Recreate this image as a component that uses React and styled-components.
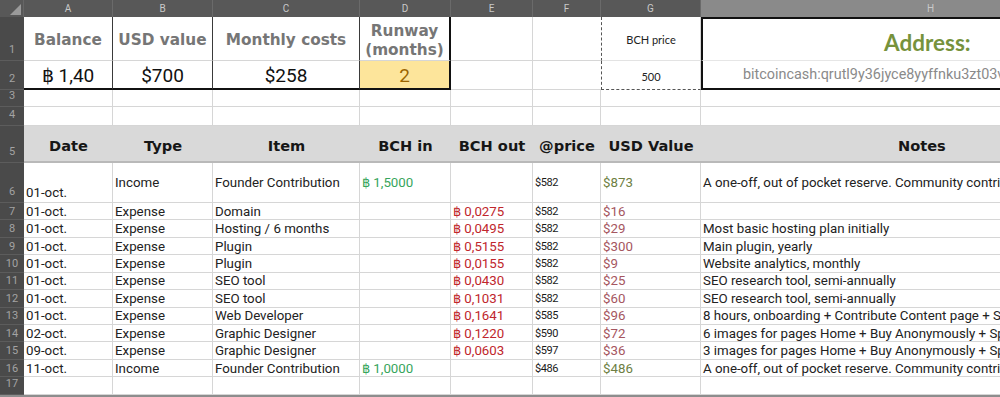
import React from "react";
import styled, { createGlobalStyle, css } from "styled-components";

const Global = createGlobalStyle`
  html, body { margin: 0; padding: 0; background: #fff; overflow: hidden; }
  * { box-sizing: border-box; }
`;

const COLS = ["A", "B", "C", "D", "E", "F", "G", "H"];
const ROW_H = "17px 44px 29px 17px 19px 37px 40px repeat(11, 17.43px) 4px";

const Frame = styled.div`
  width: 1000px;
  height: 397px;
  overflow: hidden;
  background: #8d8d8d;
`;

const Sheet = styled.div`
  display: grid;
  grid-template-columns: 24px 89px 100px 147px 91px 82px 68px 100px 460px;
  grid-template-rows: ${ROW_H};
  width: 1161px;
  font-family: Roboto, "Liberation Sans", sans-serif;
  color: #1e1e1e;
`;

const Corner = styled.div`
  background: #585858;
  border-right: 1px solid #666;
  position: relative;
  &::after {
    content: "";
    position: absolute;
    right: 2px;
    bottom: 2px;
    width: 0;
    height: 0;
    border-left: 11px solid transparent;
    border-bottom: 11px solid #9a9a9a;
  }
`;

const ColHead = styled.div`
  background: ${(p) => (p.$active ? "#8a8a8a" : "#585858")};
  color: #c9c9c9;
  font-size: 10px;
  display: flex;
  align-items: center;
  justify-content: center;
  border-right: 1px solid #6a6a6a;
`;

const RowHead = styled.div`
  background: #4a4a4a;
  color: #a3a3a3;
  font-size: 11px;
  display: flex;
  align-items: ${(p) => (p.$bottom ? "flex-end" : "center")};
  justify-content: center;
  padding-bottom: ${(p) => (p.$bottom ? "4px" : "0")};
  border-bottom: 1px solid #5c5c5c;
`;

const Cell = styled.div`
  background: #fff;
  display: flex;
  align-items: ${(p) => p.$v || "center"};
  justify-content: ${(p) => p.$h || "flex-start"};
  padding: 0 2px;
  white-space: nowrap;
  overflow: hidden;
  font-size: 13.3px;
  border-right: ${(p) => p.$r || "1px solid #d6d6d6"};
  border-bottom: ${(p) => p.$b || "1px solid #d6d6d6"};
  border-left: ${(p) => p.$l || "none"};
  border-top: ${(p) => p.$t || "none"};
`;

const Label = styled(Cell)`
  font-family: "DejaVu Sans", sans-serif;
  font-weight: 700;
  font-size: 15.3px;
  color: #767676;
  text-align: center;
  line-height: 19px;
  white-space: normal;
  padding-top: 4px;
`;

const BigValue = styled(Cell)`
  font-size: 19px;
  color: #111;
  padding-top: 2px;
  ${(p) =>
    p.$neutral &&
    css`
      background: #fde59b;
      color: #9c6500;
    `}
`;

const SmallCalc = styled(Cell)`
  font-family: Lato, "Open Sans", sans-serif;
  font-size: 11px;
  color: #222;
  padding-top: 2px;
`;

const AddressTitle = styled(Cell)`
  font-family: Lato, "Open Sans", sans-serif;
  font-weight: 700;
  font-size: 22.5px;
  color: #76923c;
  padding-left: 181px;
  padding-top: 5px;
`;

const AddressValue = styled(Cell)`
  font-size: 14.4px;
  color: #8a8a8a;
  padding-left: 40px;
`;

const Band = styled(Cell)`
  background: #d9d9d9;
  font-family: "DejaVu Sans", sans-serif;
  font-weight: 700;
  font-size: 14.6px;
  color: #161616;
  border-right: none;
  border-bottom: 2px solid #b9b9b9;
  padding: 3px 0 0 0;
`;

const Data = styled(Cell)`
  color: ${(p) => p.$tone || "#222"};
`;

const Price = styled(Cell)`
  font-size: 11px;
  letter-spacing: -0.4px;
  color: #1a1a1a;
`;

const TONE = {
  in: "#37a55c",
  out: "#c0262c",
  usdIn: "#6e7f43",
  usdOut: "#a55660",
};

const rows = [
  ["01-oct.", "Income", "Founder Contribution", "฿ 1,5000", "", "$582", "$873", "A one-off, out of pocket reserve. Community contributions welcome."],
  ["01-oct.", "Expense", "Domain", "", "฿ 0,0275", "$582", "$16", ""],
  ["01-oct.", "Expense", "Hosting / 6 months", "", "฿ 0,0495", "$582", "$29", "Most basic hosting plan initially"],
  ["01-oct.", "Expense", "Plugin", "", "฿ 0,5155", "$582", "$300", "Main plugin, yearly"],
  ["01-oct.", "Expense", "Plugin", "", "฿ 0,0155", "$582", "$9", "Website analytics, monthly"],
  ["01-oct.", "Expense", "SEO tool", "", "฿ 0,0430", "$582", "$25", "SEO research tool, semi-annually"],
  ["01-oct.", "Expense", "SEO tool", "", "฿ 0,1031", "$582", "$60", "SEO research tool, semi-annually"],
  ["01-oct.", "Expense", "Web Developer", "", "฿ 0,1641", "$585", "$96", "8 hours, onboarding + Contribute Content page + Site setup"],
  ["02-oct.", "Expense", "Graphic Designer", "", "฿ 0,1220", "$590", "$72", "6 images for pages Home + Buy Anonymously + Spend"],
  ["09-oct.", "Expense", "Graphic Designer", "", "฿ 0,0603", "$597", "$36", "3 images for pages Home + Buy Anonymously + Spend"],
  ["11-oct.", "Income", "Founder Contribution", "฿ 1,0000", "", "$486", "$486", "A one-off, out of pocket reserve. Community contributions welcome."],
  ["", "", "", "", "", "", "", ""],
];

const DARK = "1px solid #3a3a3a";
const THICK = "2px solid #111";
const DASH = "1px dashed #555";

function EmptyRow({ n }) {
  return (
    <>
      <RowHead $bottom>{n}</RowHead>
      {COLS.map((c) => (
        <Cell key={c} />
      ))}
    </>
  );
}

function DataRow({ n, r }) {
  const income = r[1] === "Income";
  const tall = n === 6;
  return (
    <>
      <RowHead $bottom={tall}>{n}</RowHead>
      <Data $v={tall ? "flex-end" : "center"} style={tall ? { paddingBottom: 2 } : undefined}>
        {r[0]}
      </Data>
      <Data>{r[1]}</Data>
      <Data>{r[2]}</Data>
      <Data $tone={TONE.in}>{r[3]}</Data>
      <Data $tone={TONE.out}>{r[4]}</Data>
      <Price>{r[5]}</Price>
      <Data $tone={income ? TONE.usdIn : TONE.usdOut}>{r[6]}</Data>
      <Data>{r[7]}</Data>
    </>
  );
}

export default function App() {
  return (
    <Frame>
      <Global />
      <Sheet>
        <Corner />
        {COLS.map((c) => (
          <ColHead key={c} $active={c === "H"}>
            {c}
          </ColHead>
        ))}

        <RowHead $bottom>1</RowHead>
        <Label $h="center" $r={DARK}>Balance</Label>
        <Label $h="center" $r={DARK}>USD value</Label>
        <Label $h="center" $r={DARK}>Monthly costs</Label>
        <Label $h="center" $r={THICK}>
          Runway
          <br />
          (months)
        </Label>
        <Cell />
        <Cell $r="none" />
        <SmallCalc $h="center" $l={DASH} $b="1px solid #e3e3e3">BCH price</SmallCalc>
        <AddressTitle $t={THICK} $l={THICK} $b="1px solid #e6e6e6">Address:</AddressTitle>

        <RowHead $bottom>2</RowHead>
        <BigValue $h="center" $r={DARK} $b={THICK}>฿ 1,40</BigValue>
        <BigValue $h="center" $r={DARK} $b={THICK}>$700</BigValue>
        <BigValue $h="center" $r={DARK} $b={THICK}>$258</BigValue>
        <BigValue $h="center" $r={THICK} $b={THICK} $neutral>2</BigValue>
        <Cell />
        <Cell $r="none" />
        <SmallCalc $h="center" $l={DASH} $b={DASH}>500</SmallCalc>
        <AddressValue $l={THICK} $b={THICK}>bitcoincash:qrutl9y36jyce8yyffnku3zt03vp2m6xk7h5w4q</AddressValue>

        <EmptyRow n={3} />
        <EmptyRow n={4} />

        <RowHead $bottom>5</RowHead>
        <Band $h="center">Date</Band>
        <Band $h="center">Type</Band>
        <Band $h="center">Item</Band>
        <Band $h="center">BCH in</Band>
        <Band $h="center">BCH out</Band>
        <Band $h="center">@price</Band>
        <Band $h="center">USD Value</Band>
        <Band $h="flex-start" style={{ paddingLeft: 197 }}>Notes</Band>

        {rows.map((r, i) =>
          i === rows.length - 1 ? (
            <EmptyRow key={i} n={6 + i} />
          ) : (
            <DataRow key={i} n={6 + i} r={r} />
          )
        )}
      </Sheet>
    </Frame>
  );
}
